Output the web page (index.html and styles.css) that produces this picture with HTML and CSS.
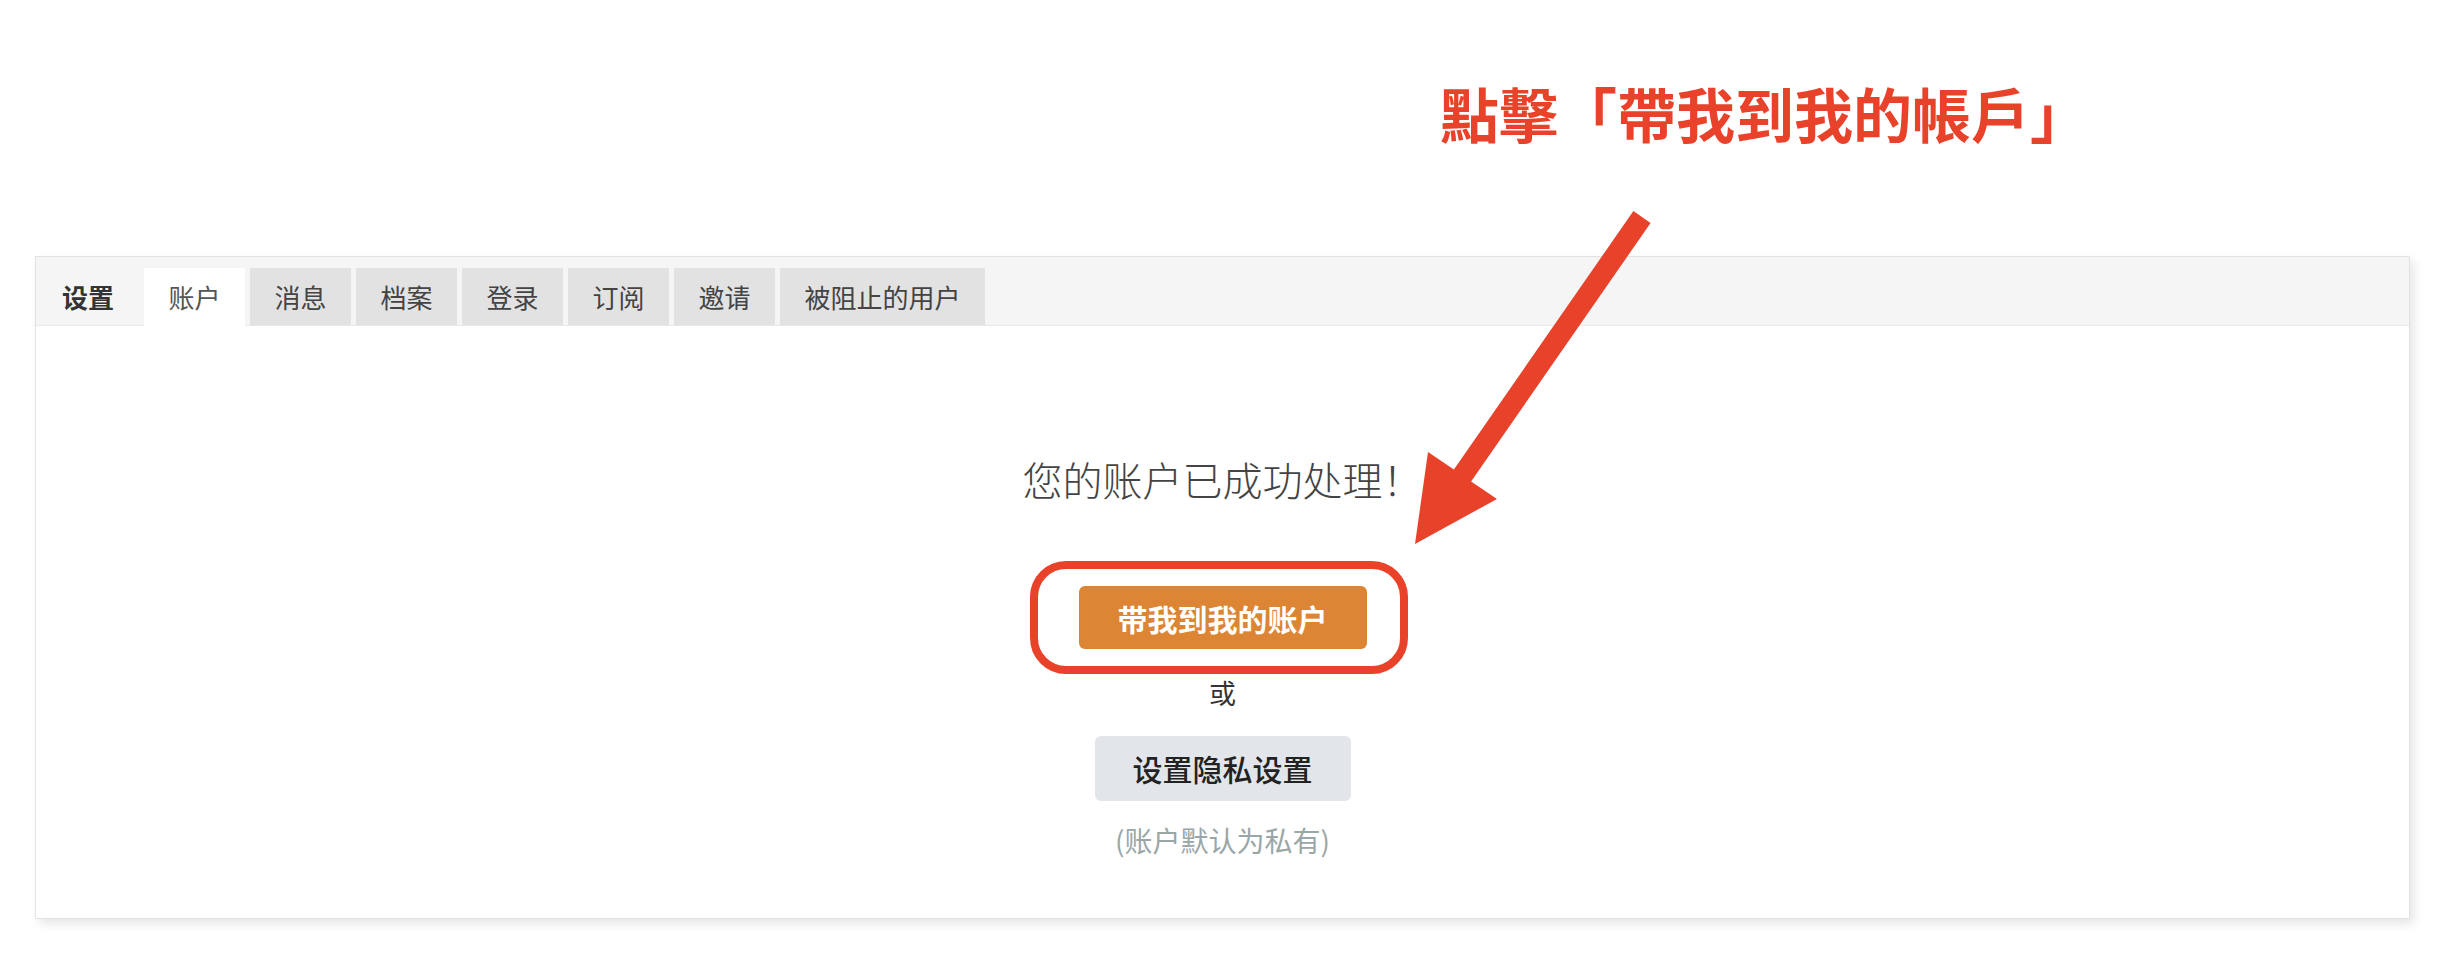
FILE: index.html
```html
<!DOCTYPE html>
<html lang="zh-CN">
<head>
    <meta charset="UTF-8">
    <meta name="viewport" content="width=device-width, initial-scale=1.0">
    <title>账户设置</title>
    <link rel="stylesheet" href="styles.css">
</head>
<body>
    <div class="callout">點擊「帶我到我的帳戶」</div>

    <div class="panel">
        <div class="tabs">
            <span class="tabs-title">设置</span>
            <a class="tab active" href="#">账户</a>
            <a class="tab" href="#">消息</a>
            <a class="tab" href="#">档案</a>
            <a class="tab" href="#">登录</a>
            <a class="tab" href="#">订阅</a>
            <a class="tab" href="#">邀请</a>
            <a class="tab" href="#">被阻止的用户</a>
        </div>

        <div class="content">
            <p class="done">您的账户已成功处理！</p>
            <div class="ring">
                <button class="btn btn-primary">带我到我的账户</button>
            </div>
            <p class="or">或</p>
            <button class="btn btn-muted">设置隐私设置</button>
            <p class="hint">(账户默认为私有)</p>
        </div>
    </div>

    <!-- 标注箭头 -->
    <svg class="arrow" viewBox="0 0 2462 966" xmlns="http://www.w3.org/2000/svg">
        <polygon points="1633.4,211 1650.6,223 1471.1,481.5 1497,499 1415,544 1428,452 1453.9,469.5" fill="#e8432a"/>
    </svg>
</body>
</html>
```

FILE: styles.css
```css
body {
    font-family: "Noto Sans CJK SC", "Noto Sans", sans-serif;
    margin: 0;
    padding: 256px 52px 46px 35px;
    background: #fff;
    color: #333;
    position: relative;
}
.callout {
    position: absolute;
    left: 1440px;
    top: 78px;
    font-size: 59px;
    font-weight: 700;
    color: #e8432a;
    line-height: 1.2;
    white-space: nowrap;
}
.arrow {
    position: absolute;
    left: 0;
    top: 0;
    width: 2462px;
    height: 966px;
    pointer-events: none;
    z-index: 2;
}
.panel {
    border: 1px solid #e2e2e2;
    background: #fff;
    box-shadow: 4px 5px 10px rgba(0, 0, 0, 0.1);
}
.tabs {
    display: flex;
    align-items: flex-end;
    background: #f5f5f5;
    border-bottom: 1px solid #e8e8e8;
    padding: 11px 0 0 26px;
}
.tabs-title {
    font-size: 26px;
    font-weight: 700;
    line-height: 57px;
    color: #333;
    margin-right: 30px;
}
.tab {
    font-size: 26px;
    line-height: 57px;
    padding: 0 24.5px;
    margin-right: 5px;
    background: #e2e2e2;
    color: #444;
    text-decoration: none;
}
.tab.active {
    background: #fff;
    color: #555;
    margin-bottom: -1px;
    padding-bottom: 1px;
}
.content {
    display: flex;
    flex-direction: column;
    align-items: center;
    padding: 125px 0 58px;
}
.done {
    font-size: 40px;
    font-weight: 300;
    line-height: 1.4;
    color: #444;
    margin: 0 0 79px;
}
.ring {
    position: relative;
}
.ring::after {
    content: "";
    position: absolute;
    top: -25px;
    bottom: -25px;
    left: -49px;
    right: -41px;
    border: 8px solid #e8432a;
    border-radius: 36px;
}
.btn {
    font-family: inherit;
    font-size: 30px;
    font-weight: 500;
    border: none;
    border-radius: 6px;
    cursor: pointer;
}
.btn-primary {
    background: #dc8535;
    color: #fff;
    font-weight: 700;
    width: 288px;
    height: 63px;
}
.btn-muted {
    background: #e2e5ea;
    color: #222;
    width: 256px;
    height: 65px;
}
.or {
    font-size: 27px;
    line-height: 1.4;
    color: #333;
    margin: 25px 0 24px;
}
.hint {
    font-size: 28px;
    line-height: 1.4;
    color: #9ba6a7;
    margin: 20px 0 0;
}
```
